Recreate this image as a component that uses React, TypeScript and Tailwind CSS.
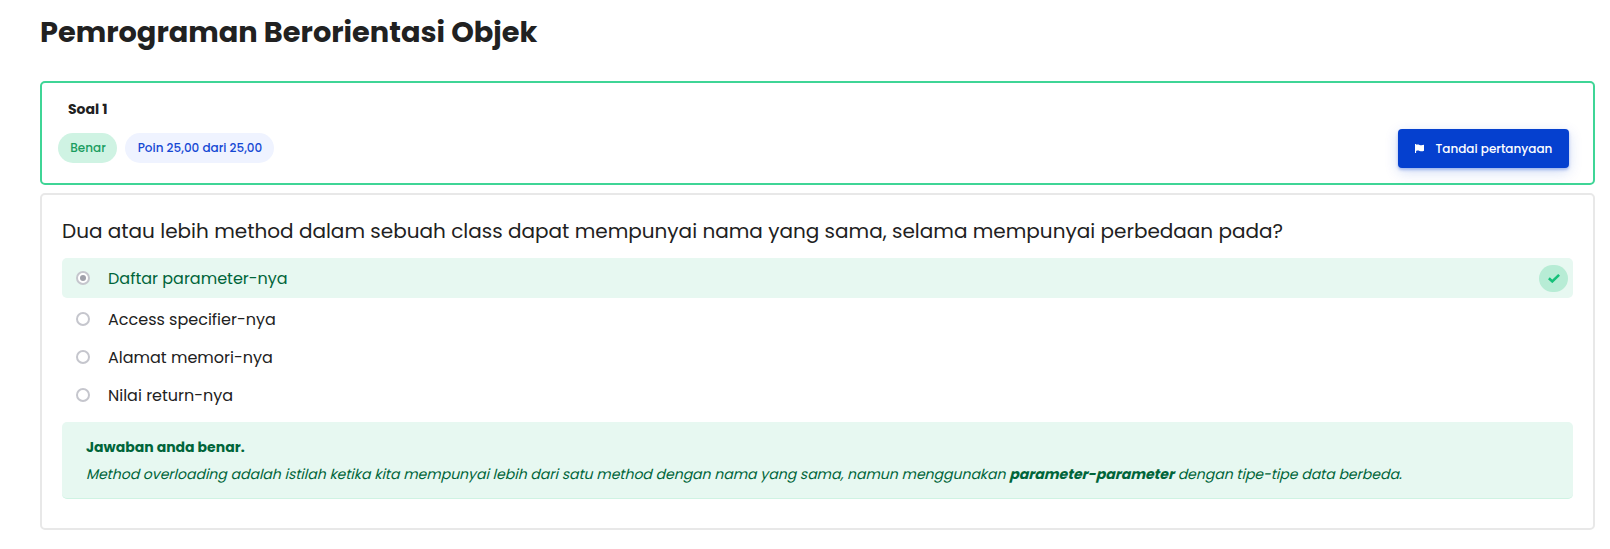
import React from "react";

const options = ["Access specifier-nya", "Alamat memori-nya", "Nilai return-nya"];

function Radio({ checked = false }: { checked?: boolean }) {
  return (
    <span className="flex size-3.5 shrink-0 items-center justify-center rounded-full border-2 border-[#c5c6cd] bg-white">
      {checked && <span className="size-1.5 rounded-full bg-[#a0a1aa]" />}
    </span>
  );
}

function Flag() {
  return (
    <svg className="h-[9px] w-[9px]" viewBox="0 0 9 9" fill="currentColor">
      <path d="M0 0H1.1V.8C2.3.3 3.4.5 4.5.9 5.9 1.5 7.3 1.4 9 .8V6.7C7.4 7.4 6 7.3 4.6 6.9 3.3 6.5 2.2 6.5 1.1 7V9H0Z" />
    </svg>
  );
}

export default function App() {
  return (
    <main className="h-[549px] overflow-hidden bg-white pl-10 pr-[15px] pt-[13px] font-['Poppins','Inter',sans-serif] text-[#212121]">
      <h1 className="h-[68px] whitespace-nowrap text-[28.8px] font-bold leading-[38px]">
        <span>Pemrograman Berorientasi Objek</span>
      </h1>

      <section className="flex h-[104px] items-start justify-between rounded-[5px] border-2 border-[#3fd596] pl-4 pr-6">
        <div className="pt-4">
          <h2 className="pl-2.5 text-[14px] font-bold leading-5">
            <span>Soal 1</span>
          </h2>
          <div className="mt-3.5 flex gap-2 whitespace-nowrap text-[12px] font-medium leading-[30px]">
            <span className="h-[30px] w-[59px] rounded-full bg-[#cff3e3] pl-px text-center text-[#1a9d60]">Benar</span>
            <span className="h-[30px] w-[149px] rounded-full bg-[#eff3ff] pl-px text-center text-[#1548d4]">Poin 25,00 dari 25,00</span>
          </div>
        </div>
        <button className="mt-[46px] flex h-[39px] w-[171px] items-center whitespace-nowrap rounded-[4px] bg-[#0540cf] pl-[17px] text-[12px] font-medium text-white shadow-[0_2px_3px_rgba(5,64,207,0.3),0_4px_14px_rgba(5,64,207,0.18)]">
          <Flag />
          <span className="ml-[11.5px]">Tandai pertanyaan</span>
        </button>
      </section>

      <section className="mt-2 h-[337px] rounded-[5px] border-2 border-[#e8e8e8] px-5">
        <p className="mt-[22px] h-[41px] whitespace-nowrap text-[20px] leading-[28px]">
          <span>Dua atau lebih method dalam sebuah class dapat mempunyai nama yang sama, selama mempunyai perbedaan pada?</span>
        </p>
        <div className="flex h-10 items-center rounded-[5px] bg-[#e7f8f1] pl-3.5 pr-[5px] text-base text-[#00653a]">
          <Radio checked />
          <span className="ml-[18px] pt-0.5">Daftar parameter-nya</span>
          <span className="ml-auto flex h-[27px] w-[29px] items-center justify-center rounded-full bg-[#b7ecd5] text-[#15c079]">
            <svg className="h-[9px] w-3" viewBox="0 0 12 9" fill="none" stroke="currentColor" strokeWidth="2.6">
              <path d="M.9 4.2 4.3 7.4 11.1.9" />
            </svg>
          </span>
        </div>
        <div className="pt-0.5 text-base">
          {options.map((label) => (
            <div key={label} className="flex h-[38px] items-center pl-3.5">
              <Radio />
              <span className="ml-[18px] pt-0.5">{label}</span>
            </div>
          ))}
        </div>
        <div className="mt-2 h-[77px] whitespace-nowrap rounded-[5px] border-b border-[#cff3e3] bg-[#e7f8f1] pl-6 pt-3 text-[14px] leading-[27px] text-[#00653a]">
          <p className="font-bold">
            <span>Jawaban anda benar.</span>
          </p>
          <p className="ml-px w-max -skew-x-[14deg]">
            <span>Method overloading adalah istilah ketika kita mempunyai lebih dari satu method dengan nama yang sama, namun menggunakan </span>
            <b>parameter-parameter</b>
            <span> dengan tipe-tipe data berbeda.</span>
          </p>
        </div>
      </section>
    </main>
  );
}
